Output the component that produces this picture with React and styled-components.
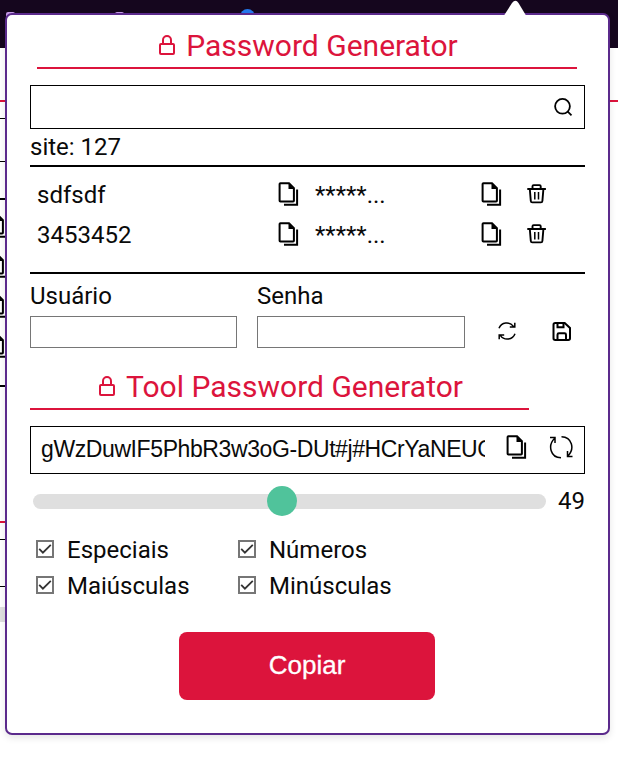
import React from "react";
import styled, { createGlobalStyle } from "styled-components";

const Global = createGlobalStyle`
  * { box-sizing: border-box; }
  html, body { margin: 0; background: #fff; overflow: hidden; }
`;
const Page = styled.div`
  position: relative;
  width: 618px;
  height: 757px;
  overflow: hidden;
  font-family: Roboto, sans-serif;
  color: #0a0a0a;
`;
const Backdrop = styled.div`
  display: flex;
  flex-direction: column;
  height: 757px;
`;
const TopBar = styled.div`
  display: flex;
  height: 48px;
  padding: 12px 0 0 6px;
  background: #15061e;
`;
const TabMark = styled.span`
  width: ${(p) => p.$w}px;
  height: 6px;
  margin-top: ${(p) => (p.$w < 5 ? 1 : 0)}px;
  margin-right: ${(p) => p.$gap}px;
  border-radius: 2px;
  background: #c79be8;
`;
const Globe = styled.span`
  width: 15px;
  height: 15px;
  margin-top: -3px;
  border-radius: 50%;
  background: #2478ee;
`;
const BackLine = styled.div`
  flex: none;
  height: ${(p) => p.$h || 1}px;
  margin-top: ${(p) => p.$gap}px;
  background: ${(p) => p.$color || "#000"};
  width: ${(p) => p.$w || "100%"};
`;
const BackIcons = styled.div`
  display: flex;
  flex-direction: column;
  gap: 16px;
  margin: 14px 0 0 -13px;
  height: 172px;
  svg { flex: none; }
`;
const Popover = styled.main`
  position: absolute;
  left: 5px;
  top: 13px;
  width: 605px;
  height: 722px;
  padding: 13px 23px 0;
  border: 2px solid #5b2a8c;
  border-radius: 7px;
  background: #fff;
  box-shadow: 0 3px 7px rgba(0, 0, 0, 0.1);
`;
const Arrow = styled.svg`
  position: absolute;
  left: 496px;
  top: -15px;
`;
const Title = styled.h1`
  display: flex;
  align-items: center;
  justify-content: center;
  gap: 11px;
  width: ${(p) => p.$w}px;
  height: 41px;
  margin: 0 0 0 ${(p) => p.$indent || 0}px;
  padding: 0 0 4px 3px;
  border-bottom: 2px solid #dc143c;
  color: #dc143c;
  font-size: 30px;
  font-weight: 400;
  line-height: 35px;
  white-space: nowrap;
`;
const SearchBox = styled.label`
  display: flex;
  align-items: center;
  justify-content: flex-end;
  height: 44px;
  margin-top: 16px;
  padding-right: 11px;
  border: 1px solid #000;
`;
const Site = styled.div`
  height: 38px;
  border-bottom: 2px solid #000;
  font-size: 24px;
  line-height: 36px;
`;
const List = styled.div`
  height: 107px;
  padding: 7px 0 0 7px;
  border-bottom: 2px solid #000;
`;
const Row = styled.div`
  display: grid;
  grid-template-columns: 241px 37px 166px 46px 30px;
  align-items: center;
  height: 40px;
  font-size: 24px;
  line-height: 38px;
  span { padding-top: 2px; }
`;
const Form = styled.div`
  display: grid;
  grid-template-columns: 207px 208px 22px 22px;
  column-gap: 20px;
  align-items: end;
  height: 74px;
`;
const Field = styled.label`
  display: flex;
  flex-direction: column;
  font-size: 24px;
  line-height: 40px;
`;
const FieldInput = styled.input`
  width: 100%;
  height: 32px;
  border: 1px solid #767676;
  padding: 0;
  background: #fff;
`;
const FormIcon = styled.span`
  display: flex;
  width: 24px;
  height: 27px;
  margin-left: ${(p) => p.$shift}px;
`;
const ToolSection = styled.section`
  margin-top: 21px;
`;
const Output = styled.div`
  display: flex;
  height: 48px;
  margin-top: 16px;
  padding-left: 9px;
  border: 1px solid #000;
`;
const Secret = styled.div`
  flex: none;
  width: 445px;
  margin-right: 21px;
  padding-left: 1px;
  overflow: hidden;
  white-space: nowrap;
  letter-spacing: -0.4px;
  font: 23px/44px "Liberation Sans", Arial, sans-serif;
`;
const OutputIcon = styled.span`
  display: flex;
  flex: none;
  width: ${(p) => p.$w}px;
  padding-top: 8px;
`;
const SliderRow = styled.div`
  display: flex;
  align-items: center;
  height: 54px;
  padding-left: 3px;
  font-size: 24px;
`;
const Track = styled.div`
  display: flex;
  align-items: center;
  width: 513px;
  height: 15px;
  margin-right: 12px;
  padding-left: 234px;
  border-radius: 8px;
  background: #dfdfdf;
`;
const Thumb = styled.span`
  width: 30px;
  height: 30px;
  border-radius: 50%;
  background: #50c39b;
`;
const Options = styled.div`
  display: grid;
  grid-template-columns: 202px 220px;
  grid-auto-rows: 36px;
  margin-top: 4px;
  padding-left: 6px;
`;
const Option = styled.div`
  display: flex;
  align-items: center;
  gap: 13px;
  font-size: 24px;
  line-height: 36px;
`;
const Check = styled.span`
  display: flex;
  width: 18px;
  height: 18px;
  margin-top: -2px;
  border: 2px solid #767676;
`;
const CopyButton = styled.button`
  display: block;
  width: 256px;
  height: 68px;
  margin: 28px 0 0 149px;
  padding: 0 0 2px;
  border: 0;
  border-radius: 8px;
  background: #dc143c;
  color: #fff;
  font: 26px "Liberation Sans", Arial, sans-serif;
  -webkit-text-stroke: 0.3px #fff;
`;

const Lock = () => (
  <svg width="16" height="24" viewBox="0 0 16 24" fill="none" stroke="currentColor" strokeWidth="2">
    <rect x="1" y="10" width="14" height="10" rx="1" />
    <path d="M4 10V6a4 4 0 0 1 8 0V10" />
  </svg>
);
const Copy = () => (
  <svg width="21" height="24" viewBox="0 0 21 24" fill="none" stroke="#000" strokeWidth="2">
    <path d="M2.4 1.2H11l4.9 4.9v12.7q0 .8-.8.8H2.4q-.8 0-.8-.8V2q0-.8.8-.8Z" />
    <path d="M10.5 1v6H16Z" fill="#000" stroke="none" />
    <path d="M19.1 7.5v15.3H6" />
  </svg>
);
const Trash = () => (
  <svg width="20" height="22" viewBox="0 0 20 22" fill="none" stroke="#000" strokeWidth="1.9">
    <path d="M.3 6h18.6M5.5 5.5V3.3q0-1.2 1.2-1.2h5.8q1.2 0 1.2 1.2v2.2M2.8 6l1 12q.1 1.4 1.5 1.4h8.6q1.4 0 1.5-1.4l1-12" />
    <path d="M7.8 9v7.5M11.5 9v7.5" strokeWidth="1.5" />
  </svg>
);
const Search = () => (
  <svg width="20" height="20" viewBox="0 0 20 20" fill="none" stroke="#000" strokeWidth="1.8">
    <circle cx="9.5" cy="9.3" r="7.4" />
    <path d="m14.5 14.3 4 4" />
  </svg>
);
const Refresh = () => (
  <svg width="20" height="20" viewBox="0 0 20 20" fill="none" stroke="#000" strokeWidth="1.5">
    <path d="M2 7.3A8.3 8.3 0 0 1 16.5 5.4M17.8 1.7V6h-5M18 12.7A8.3 8.3 0 0 1 3.5 14.6M2.2 18.3V14h5" />
  </svg>
);
const Save = () => (
  <svg width="20" height="20" viewBox="0 0 20 20" fill="none" stroke="#000" strokeWidth="2">
    <path d="M3.2 2h9.5l5.3 5v10.3q0 1.7-1.7 1.7H3.2q-1.7 0-1.7-1.7V3.7Q1.500 2 3.200 2Z" />
    <path d="M5.500 2v4.300h6V2M5.500 18.500v-4.800q0-1.400 1.400-1.400h5.700q1.400 0 1.400 1.400v4.800" />
  </svg>
);
const Cycle = () => (
  <svg width="24" height="24" viewBox="0 0 24 24" fill="none" stroke="#000" strokeWidth="1.5">
    <path d="M12 22.800C1.500 22.500-1.500 10.500 5.500 3.500M1 2.500h5v5.500M12.500 1.700c10.500.3 13.500 12 6.500 19.300M23.500 21.600h-5v-5.500" />
  </svg>
);
const Tick = () => (
  <svg width="14" height="14" viewBox="0 0 14 14" fill="none" stroke="#333" strokeWidth="1.8">
    <path d="m1.2 6.8 3.7 3.8L12.8 2.8" />
  </svg>
);

const users = ["sdfsdf", "3453452"];
const options = ["Especiais", "Números", "Maiúsculas", "Minúsculas"];

export default function App() {
  return (
    <Page>
      <Global />
      <Backdrop>
        <TopBar>
          <TabMark $w={9} $gap={45} />
          <TabMark $w={2} $gap={53} />
          <TabMark $w={9} $gap={58} />
          <TabMark $w={2} $gap={56} />
          <Globe />
        </TopBar>
        <BackLine $gap={52} $h={2} $color="#dc143c" />
        <BackLine $gap={16} $w="50%" />
        <BackLine $gap={42} $w="50%" />
        <BackLine $gap={36} $h={2} $w="50%" />
        <BackIcons><Copy /><Copy /><Copy /><Copy /></BackIcons>
        <BackLine $gap={-1} $h={2} $w="50%" />
        <BackLine $gap={134} $h={2} $w="50%" $color="#dc143c" />
        <BackLine $gap={16} $w="50%" />
        <BackLine $gap={46} $w="50%" />
        <BackLine $gap={20} $h={15} $w="50%" $color="#dfdfdf" />
      </Backdrop>
      <Popover>
        <Arrow width="24" height="17" viewBox="0 0 24 17">
          <path d="M1 15.500 9 3q3.500-4.500 6.500 0l7.500 12.500V17H1Z" fill="#fff" />
        </Arrow>
        <Title $w={540} $indent={7}><Lock />Password Generator</Title>
        <SearchBox><Search /></SearchBox>
        <Site>site: 127</Site>
        <List>
          {users.map((user) => (
            <Row key={user}>
              <span>{user}</span><Copy /><span>*****...</span><Copy /><Trash />
            </Row>
          ))}
        </List>
        <Form>
          <Field>Usuário<FieldInput /></Field>
          <Field>Senha<FieldInput /></Field>
          <FormIcon $shift={12}><Refresh /></FormIcon>
          <FormIcon $shift={25}><Save /></FormIcon>
        </Form>
        <ToolSection>
          <Title $w={499}><Lock />Tool Password Generator</Title>
          <Output>
            <Secret>gWzDuwIF5PhbR3w3oG-DUt#j#HCrYaNEUG</Secret>
            <OutputIcon $w={43}><Copy /></OutputIcon>
            <OutputIcon $w={24}><Cycle /></OutputIcon>
          </Output>
          <SliderRow><Track><Thumb /></Track>49</SliderRow>
          <Options>
            {options.map((name) => (
              <Option key={name}><Check><Tick /></Check>{name}</Option>
            ))}
          </Options>
          <CopyButton>Copiar</CopyButton>
        </ToolSection>
      </Popover>
    </Page>
  );
}
